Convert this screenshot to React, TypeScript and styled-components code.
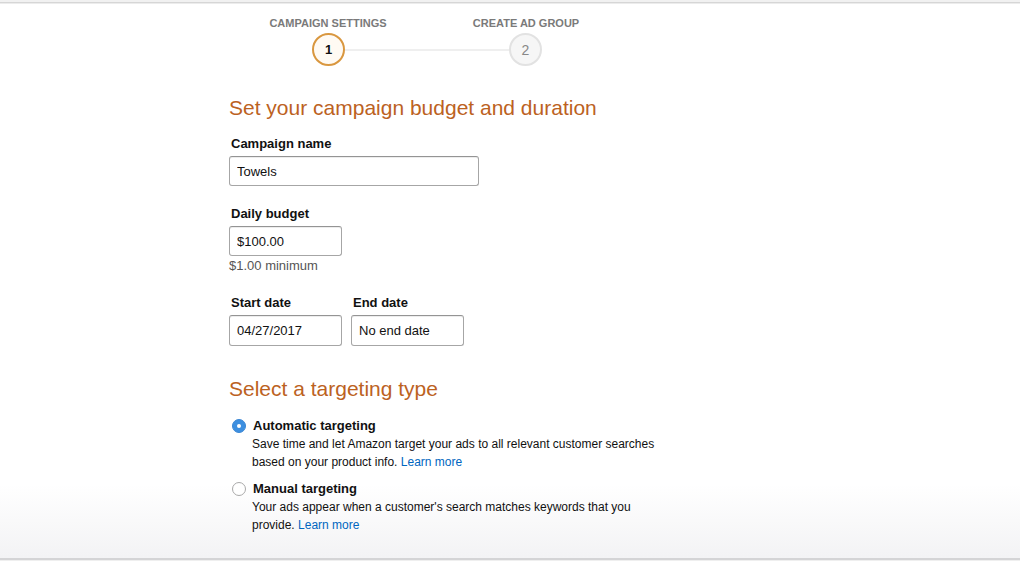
import React, { useState } from 'react'
import styled, { createGlobalStyle } from 'styled-components'

const GlobalStyle = createGlobalStyle`
  html, body {
    margin: 0;
    padding: 0;
    background: #fff;
  }
  body {
    font-family: "Liberation Sans", Arial, sans-serif;
    color: #111;
  }
`

const steps = [
  { n: 1, label: 'Campaign settings' },
  { n: 2, label: 'Create ad group' },
]

const targeting = [
  {
    id: 'auto',
    title: 'Automatic targeting',
    text: 'Save time and let Amazon target your ads to all relevant customer searches based on your product info.',
  },
  {
    id: 'manual',
    title: 'Manual targeting',
    text: "Your ads appear when a customer's search matches keywords that you provide.",
  },
]

export default function App() {
  const [target, setTarget] = useState('auto')
  return (
    <>
      <GlobalStyle />
      <Page>
        <TopRule />
        <Main>
          <Stepper>
            <StepLabels>
              {steps.map((s) => (
                <StepLabel key={s.n}>{s.label}</StepLabel>
              ))}
            </StepLabels>
            <StepTrack>
              <StepCircle $active>1</StepCircle>
              <StepLine />
              <StepCircle>2</StepCircle>
            </StepTrack>
          </Stepper>

          <Heading>Set your campaign budget and duration</Heading>

          <Field>
            <Label>Campaign name</Label>
            <Input $width={250} defaultValue="Towels" />
          </Field>

          <Field $top={20}>
            <Label>Daily budget</Label>
            <Input $width={113} defaultValue="$100.00" />
            <Hint>$1.00 minimum</Hint>
          </Field>

          <DateRow>
            <Field>
              <Label>Start date</Label>
              <Input $width={113} $height={31} defaultValue="04/27/2017" />
            </Field>
            <Field>
              <Label>End date</Label>
              <Input $width={113} $height={31} defaultValue="No end date" />
            </Field>
          </DateRow>

          <Heading $top={31}>Select a targeting type</Heading>

          <Options>
            {targeting.map((o) => (
              <Option key={o.id} onClick={() => setTarget(o.id)}>
                <Radio $checked={target === o.id} />
                <OptionBody>
                  <OptionTitle>{o.title}</OptionTitle>
                  <OptionText>
                    {o.text} <Link href="#">Learn more</Link>
                  </OptionText>
                </OptionBody>
              </Option>
            ))}
          </Options>
        </Main>
        <BottomRule />
      </Page>
    </>
  )
}

const Page = styled.div`
  height: 561px;
  display: flex;
  flex-direction: column;
  overflow: hidden;
`

const TopRule = styled.div`
  height: 4px;
  flex: none;
  background: linear-gradient(to bottom, #f1f1f1 0, #f1f1f1 2px, #d6d6d6 2px, #d6d6d6 3px, #ececec 3px);
`

const BottomRule = styled.div`
  height: 4px;
  flex: none;
  background: linear-gradient(to bottom, #f3f3f5 0, #f3f3f5 1px, #d4d4d6 1px, #d4d4d6 3px, #efefef 3px);
`

const Main = styled.main`
  flex: 1;
  padding: 13px 0 0 229px;
  display: flex;
  flex-direction: column;
  align-items: flex-start;
  background: linear-gradient(to bottom, #fff 0, #fff 480px, #f3f3f5 100%);
`

const Stepper = styled.div`
  width: 396px;
  display: flex;
  flex-direction: column;
`

const StepLabels = styled.div`
  display: grid;
  grid-template-columns: 198px 198px;
`

const StepLabel = styled.div`
  text-align: center;
  font-size: 11px;
  line-height: 13px;
  font-weight: bold;
  text-transform: uppercase;
  color: #7a7a7a;
`

const StepTrack = styled.div`
  display: flex;
  align-items: center;
  padding: 3px 83px 0;
`

const StepCircle = styled.div<{ $active?: boolean }>`
  box-sizing: border-box;
  width: 33px;
  height: 33px;
  border-radius: 50%;
  flex: none;
  display: grid;
  place-items: center;
  font-size: ${(p) => (p.$active ? '13px' : '14px')};
  font-weight: ${(p) => (p.$active ? 'bold' : 'normal')};
  color: ${(p) => (p.$active ? '#111' : '#888')};
  background: ${(p) => (p.$active ? '#fffaf3' : '#f6f6f6')};
  border: 2px solid ${(p) => (p.$active ? '#d9973f' : '#e2e2e2')};
`

const StepLine = styled.div`
  flex: 1;
  height: 2px;
  background: #efefef;
`

const Heading = styled.h1<{ $top?: number }>`
  margin: ${(p) => p.$top ?? 30}px 0 0;
  font-size: 21px;
  line-height: 24px;
  font-weight: normal;
  color: #bc621f;
`

const Field = styled.div<{ $top?: number }>`
  margin-top: ${(p) => p.$top ?? 16}px;
  display: flex;
  flex-direction: column;
  align-items: flex-start;
`

const Label = styled.label`
  font-size: 13px;
  line-height: 16px;
  font-weight: bold;
  color: #111;
  padding-left: 2px;
  margin-bottom: 4px;
`

const Input = styled.input<{ $width: number; $height?: number }>`
  box-sizing: border-box;
  width: ${(p) => p.$width}px;
  height: ${(p) => p.$height ?? 30}px;
  padding: 0 7px;
  font-family: inherit;
  font-size: 13px;
  color: #111;
  background: #fff;
  border: 1px solid #a6a6a6;
  border-top-color: #949494;
  border-radius: 3px;
  box-shadow: 0 1px 0 rgba(255, 255, 255, 0.5), 0 1px 0 rgba(0, 0, 0, 0.07) inset;
  outline: none;
`

const Hint = styled.div`
  margin-top: 2px;
  font-size: 13px;
  line-height: 16px;
  color: #555;
`

const DateRow = styled.div`
  display: flex;
  gap: 9px;
  margin-top: 5px;
`

const Options = styled.div`
  margin-top: 16px;
  display: flex;
  flex-direction: column;
  gap: 9px;
`

const Option = styled.div`
  display: flex;
  gap: 6px;
  cursor: pointer;
`

const Radio = styled.span<{ $checked: boolean }>`
  box-sizing: border-box;
  flex: none;
  width: 14px;
  height: 14px;
  margin: 2px 0 0 3px;
  border-radius: 50%;
  position: relative;
  background: ${(p) => (p.$checked ? '#3d8fe0' : '#fff')};
  border: 1px solid ${(p) => (p.$checked ? '#3a86d4' : '#a9a9a9')};
  &::after {
    content: '';
    display: ${(p) => (p.$checked ? 'block' : 'none')};
    position: absolute;
    left: 4px;
    top: 4px;
    width: 4px;
    height: 4px;
    border-radius: 50%;
    background: #fff;
  }
`

const OptionBody = styled.div`
  display: flex;
  flex-direction: column;
  width: 410px;
`

const OptionTitle = styled.div`
  font-size: 13px;
  line-height: 18px;
  font-weight: bold;
  color: #111;
  padding-left: 1px;
`

const OptionText = styled.div`
  font-size: 12px;
  line-height: 18px;
  color: #111;
`

const Link = styled.a`
  color: #0066c0;
  text-decoration: none;
`
